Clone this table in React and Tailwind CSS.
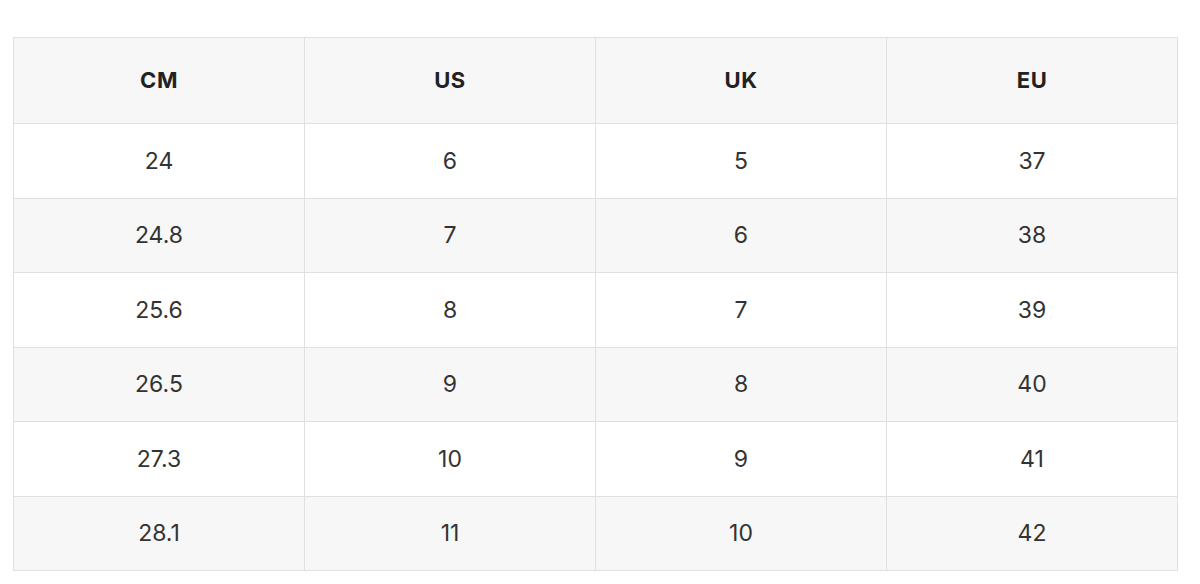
const headers = ["CM", "US", "UK", "EU"];
const rows = [
  ["24", "6", "5", "37"],
  ["24.8", "7", "6", "38"],
  ["25.6", "8", "7", "39"],
  ["26.5", "9", "8", "40"],
  ["27.3", "10", "9", "41"],
  ["28.1", "11", "10", "42"],
];

export default function App() {
  return (
    <div className="w-[1200px] h-[584px] bg-white pt-[37px] pl-[13px] font-['Inter','Lato',sans-serif]">
      <table className="w-[1165px] table-fixed border-collapse border border-[#e0e0e0]">
        <thead>
          <tr className="h-[86px] bg-[#f7f7f7]">
            {headers.map((h) => (
              <th key={h} className="border border-[#e0e0e0] text-center text-[22px] font-bold tracking-[0.5px] text-[#222] align-middle">
                {h}
              </th>
            ))}
          </tr>
        </thead>
        <tbody>
          {rows.map((r, i) => (
            <tr key={i} className={i % 2 === 1 ? "h-[74.5px] bg-[#f7f7f7]" : "h-[74.5px] bg-white"}>
              {r.map((c, j) => (
                <td key={j} className="border border-[#e0e0e0] text-center text-[23px] text-[#333] align-middle">
                  {c}
                </td>
              ))}
            </tr>
          ))}
        </tbody>
      </table>
    </div>
  );
}
